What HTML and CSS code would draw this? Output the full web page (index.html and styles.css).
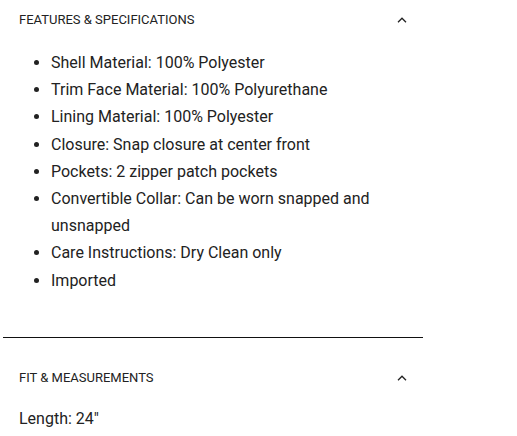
FILE: index.html
```html
<!DOCTYPE html>
<html>
<head>
<meta charset="utf-8">
<link rel="stylesheet" href="styles.css">
</head>
<body>
<div class="accordion">
  <section class="panel panel-first">
    <div class="panel-head">
      <span class="panel-title">FEATURES &amp; SPECIFICATIONS</span>
      <svg class="chev" width="10" height="6" viewBox="0 0 10 6"><path d="M1 5.2 L5 1.2 L9 5.2" fill="none" stroke="#222" stroke-width="1.3"/></svg>
    </div>
    <ul class="specs">
      <li>Shell Material: 100% Polyester</li>
      <li>Trim Face Material: 100% Polyurethane</li>
      <li>Lining Material: 100% Polyester</li>
      <li>Closure: Snap closure at center front</li>
      <li>Pockets: 2 zipper patch pockets</li>
      <li>Convertible Collar: Can be worn snapped and unsnapped</li>
      <li>Care Instructions: Dry Clean only</li>
      <li>Imported</li>
    </ul>
  </section>
  <section class="panel panel-second">
    <div class="panel-head">
      <span class="panel-title">FIT &amp; MEASUREMENTS</span>
      <svg class="chev" width="10" height="6" viewBox="0 0 10 6"><path d="M1 5.2 L5 1.2 L9 5.2" fill="none" stroke="#222" stroke-width="1.3"/></svg>
    </div>
    <p class="fit">Length: 24"</p>
  </section>
</div>
</body>
</html>
```
FILE: styles.css
```css
html, body {
  margin: 0;
  padding: 0;
  background: #fff;
}
body {
  font-family: Roboto, "Liberation Sans", sans-serif;
  color: #222;
}
.accordion {
  margin-left: 3px;
  width: 420px;
}
.panel-first {
  border-bottom: 1px solid #111;
  padding-bottom: 43px;
}
.panel-second {
  padding-top: 20px;
}
.panel-head {
  display: flex;
  align-items: center;
  justify-content: space-between;
  padding: 12px 16px;
  height: 16px;
}
.panel-title {
  font-size: 13px;
  line-height: 16px;
  letter-spacing: 0;
}
.chev {
  display: block;
  margin-right: 0;
}
.specs {
  margin: 9px 16px 0 16px;
  padding-left: 32px;
  font-size: 16px;
  line-height: 27.2px;
}
.fit {
  margin: 7px 16px 0;
  font-size: 16px;
  line-height: 27.2px;
}
```
